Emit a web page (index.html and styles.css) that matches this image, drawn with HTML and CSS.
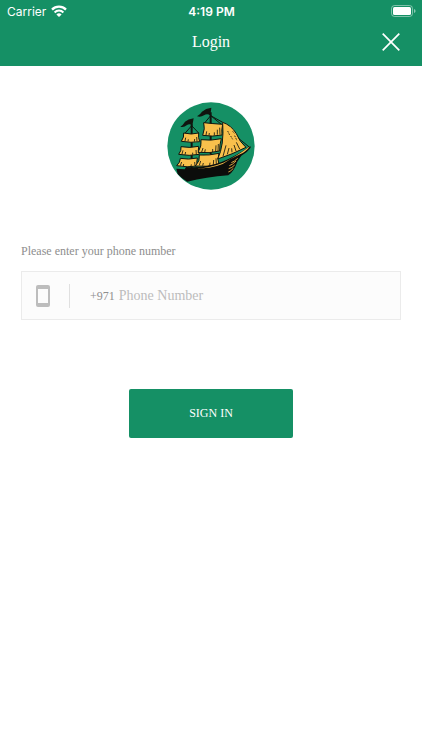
FILE: index.html
```html
<!DOCTYPE html>
<html lang="en">
<head>
    <meta charset="UTF-8">
    <meta name="viewport" content="width=device-width, initial-scale=1.0">
    <title>Login</title>
    <link rel="stylesheet" href="styles.css">
</head>
<body>

<header class="header">
    <div class="status-bar">
        <div class="carrier">
            <span>Carrier</span>
            <svg class="wifi" viewBox="0 0 16 12" width="16" height="12">
                <path d="M1 4.6 A9.8 9.8 0 0 1 15 4.6" fill="none" stroke="#fff" stroke-width="2.3"/>
                <path d="M3.6 7.4 A6.2 6.2 0 0 1 12.4 7.4" fill="none" stroke="#fff" stroke-width="2.1"/>
                <path d="M8 12 L5.4 9.5 A3.6 3.6 0 0 1 10.6 9.5 Z" fill="#fff"/>
            </svg>
        </div>
        <span class="time">4:19 PM</span>
        <svg class="battery" viewBox="0 0 25 12" width="25" height="12">
            <rect x="0.5" y="0.5" width="21" height="11" rx="3" fill="none" stroke="#fff" stroke-opacity="0.45"/>
            <rect x="2" y="2" width="18" height="8" rx="1.5" fill="#fff"/>
            <path d="M23 4 Q24.6 4.6 24.6 6 Q24.6 7.4 23 8 Z" fill="#fff" fill-opacity="0.5"/>
        </svg>
    </div>
    <div class="nav-bar">
        <h1 class="title">Login</h1>
        <button type="button" class="close" aria-label="Close">
            <svg viewBox="0 0 18 18" width="18" height="18">
                <path d="M0.7 0.7 L17.3 17.3 M17.3 0.7 L0.7 17.3" stroke="#fff" stroke-width="1.7"/>
            </svg>
        </button>
    </div>
</header>

<main class="content">
    <svg class="logo" viewBox="21 21 264 264" width="88" height="88" role="img" aria-label="Sailing ship">
        <circle cx="153" cy="153" r="131" fill="#159065"/>
        <!-- masts and flags -->
        <g stroke="#10150f" fill="none" stroke-width="4">
            <path d="M152 52 V218 M95 88 V225" stroke-width="6"/>
            <path d="M152 62 L132 86 M152 62 L188 82 M95 92 L74 116 M95 92 L116 114" stroke-width="3"/>
            <path d="M152 62 L270 158" stroke-width="3"/>
        </g>
        <path d="M154 38 L151 62 Q142 54 132 61 Q122 68 111 64 Q121 58 126 50 Q137 40 154 38 Z" fill="#10150f"/>
        <path d="M101 70 L97 92 Q89 84 80 91 Q72 98 61 95 Q70 89 75 80 Q84 72 101 70 Z" fill="#10150f"/>
        <!-- sails -->
        <g fill="#f9c04c" stroke="#10150f" stroke-width="3" stroke-linejoin="round">
            <path d="M71 114 Q94 120 116 114 Q114 128 119 140 Q94 144 64 139 Q73 126 71 114 Z"/>
            <path d="M63 155 Q90 160 116 154 Q113 167 118 178 Q88 184 56 178 Q65 167 63 155 Z"/>
            <path d="M61 190 Q84 195 112 189 Q108 203 113 213 Q81 218 50 212 Q61 202 61 190 Z"/>
            <path d="M131 83 Q158 86 188 88 Q184 105 186 120 Q157 126 128 121 Q136 101 131 83 Z"/>
            <path d="M123 134 Q153 138 184 131 Q178 151 179 168 Q148 176 114 172 Q126 153 123 134 Z"/>
            <path d="M118 180 Q148 182 177 175 Q171 195 177 208 Q143 217 106 213 Q121 198 118 180 Z"/>
            <path d="M188 82 Q214 91 229 116 Q239 141 258 157 Q217 178 173 192 Q193 151 188 82 Z"/>
        </g>
        <!-- folds in the sails -->
        <g stroke="#10150f" fill="none" stroke-width="2.5">
            <path d="M75 138 L77 128 M84 139 L85 133 M103 140 L104 132 M111 139 L110 126"/>
            <path d="M66 177 L69 166 M75 179 L77 171 M98 179 L98 173 M109 178 L108 165"/>
            <path d="M61 212 L65 201 M70 214 L71 207 M93 214 L94 208 M105 213 L104 201"/>
            <path d="M138 120 L140 109 M147 121 L148 114 M163 121 L163 112 M172 119 L172 104 M180 119 L179 98"/>
            <path d="M125 171 L129 159 M134 172 L136 163 M158 171 L158 162 M167 169 L168 151 M174 168 L175 147"/>
            <path d="M118 211 L122 198 M128 212 L130 204 M149 211 L150 203 M160 209 L161 195 M169 208 L168 190"/>
            <path d="M189 184 L198 151 M202 178 L207 159 M216 172 L215 160 M228 168 L222 150 M239 162 L229 142"/>
            <path d="M203 108 L209 120 M212 123 L218 133 M224 122 L231 137 M218 109 L224 116" stroke-dasharray="5 3"/>
        </g>
        <!-- hull -->
        <path d="M49 221 L74 223 L78 216 Q139 219 186 200 Q224 186 271 153 L272 158 Q262 172 244 182 L232 200 Q223 228 205 241 Q138 246 82 260 Q64 250 53 237 Z" fill="#0c0d0b"/>
        <path d="M110 221 Q152 218 190 203 Q224 188 270 154 Q258 171 240 178 Q214 190 188 207 Q152 221 110 221 Z" fill="#f9c04c"/>
        <path d="M208 212 Q218 209 228 198 M206 221 Q216 219 224 210 M205 231 Q212 229 220 220 M214 203 Q224 199 233 190" stroke="#f9c04c" stroke-width="2.5" fill="none"/>
    </svg>

    <form class="login-form">
        <label class="label" for="phone">Please enter your phone number</label>
        <div class="field">
            <svg class="phone-icon" viewBox="0 0 14 22" width="14" height="22">
                <path fill-rule="evenodd" d="M2 0 H12 Q14 0 14 2 V20 Q14 22 12 22 H2 Q0 22 0 20 V2 Q0 0 2 0 Z M2 4 V18 H12 V4 Z" fill="#bdbdbd"/>
            </svg>
            <span class="prefix">+971</span>
            <input type="tel" id="phone" class="phone" placeholder="Phone Number">
        </div>
        <button type="submit" class="sign-in">SIGN IN</button>
    </form>
</main>

</body>
</html>
```

FILE: styles.css
```css
* {
    box-sizing: border-box;
}
body {
    margin: 0;
    background-color: #fff;
    font-family: "Liberation Serif", serif;
}
.header {
    background-color: #159065;
    color: #fff;
    padding-bottom: 4px;
}
.status-bar {
    display: grid;
    grid-template-columns: 1fr auto 1fr;
    align-items: center;
    height: 22px;
    padding: 0 6px 0 7px;
    font-family: Inter, sans-serif;
    font-size: 12px;
}
.carrier {
    display: flex;
    align-items: center;
    gap: 5px;
}
.time {
    font-weight: 600;
}
.battery {
    justify-self: end;
}
.nav-bar {
    display: grid;
    grid-template-columns: 1fr auto 1fr;
    align-items: center;
    height: 40px;
    padding: 0 22px;
}
.title {
    grid-column: 2;
    margin: 0;
    font-size: 16px;
    font-weight: normal;
}
.close {
    justify-self: end;
    display: flex;
    padding: 0;
    border: none;
    background: none;
    cursor: pointer;
}
.content {
    padding: 36px 21px;
}
.logo {
    display: block;
    margin: 0 auto;
}
.login-form {
    display: flex;
    flex-direction: column;
    margin-top: 52px;
}
.label {
    color: #8e8e8e;
    font-size: 12px;
    line-height: 18px;
}
.field {
    display: flex;
    align-items: center;
    height: 49px;
    margin-top: 11px;
    padding: 0 14px;
    border: 1px solid #ebebeb;
    background-color: #fcfcfc;
}
.prefix {
    margin-left: 19px;
    padding-left: 20px;
    border-left: 1px solid #e0e0e0;
    color: #8e8e8e;
    font-size: 12px;
    line-height: 24px;
}
.phone {
    flex: 1;
    min-width: 0;
    padding: 0 0 0 4px;
    border: none;
    outline: none;
    background: none;
    color: #8e8e8e;
    font-family: inherit;
    font-size: 14px;
    line-height: 24px;
}
.phone::placeholder {
    color: #bdbdbd;
}
.sign-in {
    align-self: center;
    width: 43%;
    height: 49px;
    margin-top: 69px;
    border: none;
    border-radius: 2px;
    background-color: #159065;
    color: #fff;
    font-family: inherit;
    font-size: 12px;
    cursor: pointer;
}
```
